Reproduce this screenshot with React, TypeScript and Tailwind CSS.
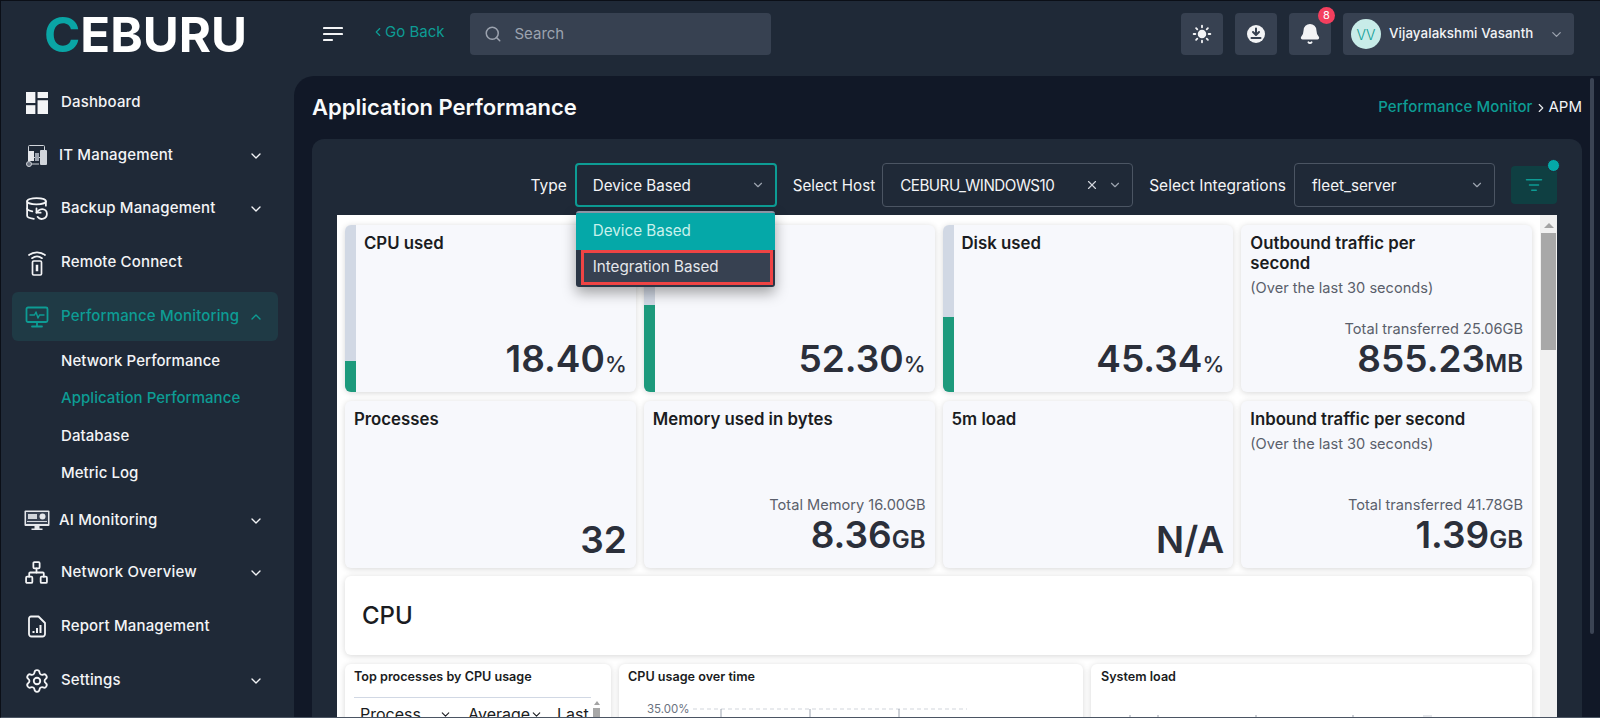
import React from "react";
import { ChevronDown, ChevronUp, ChevronLeft, ChevronRight, Search, Sun, Bell, X, ListFilter, DatabaseBackup, Network, Settings } from "lucide-react";

const ui = "font-['Inter','Liberation_Sans',sans-serif]";

function DashIcon() {
  return (
    <svg width="22" height="22" viewBox="0 0 20 20" fill="#f3f4f6">
      <rect x="0" y="0" width="8.5" height="10" />
      <rect x="10.5" y="0" width="9.5" height="5.5" />
      <rect x="0" y="12" width="8.5" height="8" />
      <rect x="10.5" y="7.5" width="9.5" height="12.5" />
    </svg>
  );
}

function ItIcon() {
  return (
    <svg width="24" height="24" viewBox="0 0 24 24" fill="none" stroke="#d1d5db" strokeWidth="1">
      <rect x="3.5" y="1.5" width="16" height="12" rx="1" />
      <rect x="3" y="7" width="6" height="10" fill="#e5e7eb" stroke="none" />
      <rect x="10" y="9" width="4" height="8" fill="#9ca3af" stroke="none" />
      <rect x="15" y="6" width="7" height="15" rx="1" fill="#d1d5db" stroke="none" />
      <circle cx="4" cy="20" r="2.5" fill="#6b7280" />
      <path d="M7 20h7" />
    </svg>
  );
}

function RemoteIcon() {
  return (
    <svg width="20" height="26" viewBox="0 0 20 26" fill="none" stroke="#f3f4f6" strokeWidth="1.7" strokeLinecap="round">
      <path d="M2 5c4.5-3.6 11.5-3.6 16 0" />
      <path d="M5 8.2c3-2.2 7-2.2 10 0" />
      <rect x="5.5" y="11" width="9" height="14" rx="1.2" />
      <rect x="9" y="15" width="2" height="6" fill="#f3f4f6" strokeWidth="0.5" />
    </svg>
  );
}

function PerfIcon() {
  return (
    <svg width="24" height="22" viewBox="0 0 24 22" fill="none" stroke="#0d9c94" strokeWidth="1.8" strokeLinecap="round" strokeLinejoin="round">
      <rect x="1.5" y="1.5" width="21" height="14.5" rx="1.5" />
      <path d="M5 9h4.5l1.5-3 2 6 1.5-3H19" strokeWidth="1.4" />
      <path d="M12 16v4M7 20.5h10" />
    </svg>
  );
}

function AiIcon() {
  return (
    <svg width="26" height="21" viewBox="0 0 26 21" fill="none">
      <rect x="0.5" y="0.5" width="25" height="15.5" rx="1" fill="#e5e7eb" />
      <rect x="2" y="2" width="22" height="12" fill="#374151" />
      <rect x="4" y="4" width="9" height="5" fill="#d1d5db" />
      <circle cx="18.5" cy="6.5" r="3" fill="#e5e7eb" />
      <path d="M3 11.5h20" stroke="#d1d5db" />
      <path d="M10.5 16h5v2.5h3V20h-11v-1.500h3z" fill="#e5e7eb" />
    </svg>
  );
}

function ReportIcon() {
  return (
    <svg width="20" height="23" viewBox="0 0 20 23" fill="none" stroke="#f3f4f6" strokeWidth="1.8" strokeLinejoin="round">
      <path d="M4 1.500h7.500L18 8v11a2.500 2.500 0 0 1-2.500 2.500h-11A2.500 2.500 0 0 1 2 19V3.500a2 2 0 0 1 2-2z" />
      <path d="M6.500 18v-2M10 18v-5M13.500 18v-8" strokeWidth="2" />
    </svg>
  );
}

function Hamburger() {
  return (
    <svg width="20" height="16" viewBox="0 0 20 16" stroke="#f3f4f6" strokeWidth="2.200" strokeLinecap="round">
      <path d="M1 2h18M1 8h18M1 14h8" />
    </svg>
  );
}

function DownloadIcon() {
  return (
    <svg width="20" height="20" viewBox="0 0 20 20">
      <circle cx="10" cy="10" r="9" fill="#f3f4f6" />
      <path d="M10 4.500v6M7 8l3 3 3-3M5.500 14h9" stroke="#374151" strokeWidth="2" fill="none" strokeLinecap="round" strokeLinejoin="round" />
    </svg>
  );
}

function NavRow({ icon, label, open, active, tight, className }: { icon: React.ReactNode; label: string; open?: boolean; active?: boolean; tight?: boolean; className: string }) {
  const chevron = open === undefined ? null : active ? <ChevronUp size={16} /> : <ChevronDown size={16} />;
  return (
    <div className={`flex h-[49px] items-center rounded-md pr-[14px] ${active ? "bg-[#1f3a45] text-[#0d9c94]" : "text-[#f3f4f6]"} ${className}`}>
      <div className="flex w-[49px] shrink-0 justify-center">{icon}</div>
      <span className={`text-[15px] font-medium tracking-[0.16px] whitespace-nowrap ${tight ? "-ml-[2px]" : ""}`}>{label}</span>
      {chevron && <span className="ml-auto">{chevron}</span>}
    </div>
  );
}

function SubRow({ label, active }: { label: string; active?: boolean }) {
  return (
    <div className={`flex h-[37.5px] items-center pl-[60px] text-[15px] font-medium tracking-[0.05px] ${active ? "text-[#0d9c94]" : "text-[#f3f4f6]"}`}>{label}</div>
  );
}

function Sidebar() {
  return (
    <aside className="flex w-[293px] shrink-0 flex-col">
      <div className="h-[76px] pl-[43px] pt-[14px]">
        <svg width="212" height="42" viewBox="0 0 212 42">
          <text x="0" y="37" textLength="203" lengthAdjust="spacingAndGlyphs" fontFamily="Inter, sans-serif" fontSize="48" fontWeight="700" fill="#fff">
            <tspan fill="#0aa5a5">C</tspan>EBURU
          </text>
        </svg>
      </div>
      <nav className="pl-[11px] pr-[16px] pt-[1px]">
        <NavRow icon={<DashIcon />} label="Dashboard" className="" />
        <NavRow icon={<ItIcon />} label="IT Management" open tight className="mt-[4px]" />
        <NavRow icon={<DatabaseBackup size={25} strokeWidth={1.7} />} label="Backup Management" open className="mt-[4px]" />
        <NavRow icon={<RemoteIcon />} label="Remote Connect" className="mt-[5px]" />
        <NavRow icon={<PerfIcon />} label="Performance Monitoring" open active className="mt-[5px]" />
        <div className="-ml-[11px] pt-[1px]">
          <SubRow label="Network Performance" />
          <SubRow label="Application Performance" active />
          <SubRow label="Database" />
          <SubRow label="Metric Log" />
        </div>
        <NavRow icon={<AiIcon />} label="AI Monitoring" open tight className="mt-[4px]" />
        <NavRow icon={<Network size={25} strokeWidth={1.7} />} label="Network Overview" open className="mt-[3px]" />
        <NavRow icon={<ReportIcon />} label="Report Management" className="mt-[5px]" />
        <NavRow icon={<Settings size={26} strokeWidth={1.7} />} label="Settings" open className="mt-[5px]" />
      </nav>
    </aside>
  );
}

function IconButton({ children }: { children: React.ReactNode }) {
  return <div className="relative flex h-[42px] w-[42px] items-center justify-center rounded bg-[#374151] text-[#f3f4f6]">{children}</div>;
}

function Header() {
  return (
    <header className="flex h-[75px] shrink-0 items-start pt-[12px] text-[#f3f4f6]">
      <div className="ml-[29px] mt-[13px]"><Hamburger /></div>
      <div className="ml-[29px] mt-[8px] flex items-center text-[15px] text-[#0d9c94]">
        <ChevronLeft size={14} className="-ml-[1px]" />
        <span>Go Back</span>
      </div>
      <div className="ml-[26px] flex h-[42px] w-[301px] items-center rounded bg-[#374151] pl-[14px] text-[#9ca3af]">
        <Search size={18} />
        <span className="ml-[12px] text-[15px]">Search</span>
      </div>
      <div className="ml-auto mr-[26px] flex gap-[12px]">
        <IconButton><Sun size={20} fill="#f3f4f6" strokeWidth={2.200} /></IconButton>
        <IconButton><DownloadIcon /></IconButton>
        <IconButton>
          <Bell size={22} fill="#f3f4f6" />
          <span className="absolute -top-[6px] right-[-4px] flex h-[17px] w-[17px] items-center justify-center rounded-full bg-[#f43f5e] text-[11px] text-white">8</span>
        </IconButton>
        <div className="flex h-[42px] w-[231px] items-center rounded bg-[#374151] pl-[8px]">
          <span className="flex h-[30px] w-[30px] items-center justify-center rounded-full bg-[#c8ece8] text-[14px] font-light text-[#0d9c94]">VV</span>
          <span className="ml-[8px] text-[13.300px] font-medium tracking-[0.1px] whitespace-nowrap">Vijayalakshmi Vasanth</span>
          <ChevronDown size={15} className="ml-auto mr-[10px] text-[#9ca3af]" />
        </div>
      </div>
    </header>
  );
}

function Select({ width, value, valueClass, focus, clear, children }: { width: string; value: string; valueClass?: string; focus?: boolean; clear?: boolean; children?: React.ReactNode }) {
  return (
    <div className={`relative flex h-[44px] items-center rounded pr-[10px] text-[15.200px] text-[#f3f4f6] ${width} ${focus ? "border-2 border-[#0d9c94] pl-[16px]" : "border border-[#4b5563] pl-[17px]"}`}>
      <span className={`pt-[2px] whitespace-nowrap ${valueClass ?? ""}`}>{value}</span>
      {clear && <X size={14} className="ml-auto mr-[9px] text-[#d1d5db]" />}
      <ChevronDown size={14} className={`${clear ? "" : "ml-auto"} text-[#9ca3af]`} />
      {children}
    </div>
  );
}

function TypeMenu() {
  return (
    <div className="absolute -left-[1px] top-[46px] z-10 h-[76px] w-[199px] overflow-hidden rounded-[3px] border-t-2 border-[#8b95a5] bg-[#2b3646] shadow-[0_6px_14px_rgba(0,0,0,0.35)]">
      <div className="flex h-[37px] items-center bg-[#05a8a8] pl-[17px] text-[#c9f1ec]">Device Based</div>
      <div className="ml-[5px] mr-[2px] flex h-[35px] items-center border-[3px] border-[#ef4444] bg-[#374151] pl-[9px] text-[#e5e7eb]">Integration Based</div>
    </div>
  );
}

function Meter({ used }: { used: string }) {
  return (
    <div className="flex w-[11px] shrink-0 flex-col justify-end overflow-hidden rounded-l-md bg-[#d1d8e4]">
      <div className={`bg-[#1d9a7c] ${used}`} />
    </div>
  );
}

function Stat({ title, note, total, value, unit, meter }: { title?: React.ReactNode; note?: string; total?: string; value: string; unit?: string; meter?: string }) {
  return (
    <div className="flex h-[167px] rounded-md bg-[#f7f8fc] shadow-[0_1px_6px_rgba(0,0,0,0.16)]">
      {meter && <Meter used={meter} />}
      <div className={`flex min-w-0 flex-1 flex-col pb-[8px] pr-[9px] pt-[8px] ${meter ? "pl-[8px]" : "pl-[9px]"}`}>
        {title && <div className="text-[16.800px] leading-[20px] font-semibold text-[#1a1c21]">{title}</div>}
        {note && <div className="mt-[5px] text-[14.600px] leading-[20px] text-[#5a5f6b]">{note}</div>}
        <div className="mt-auto text-right">
          {total && <div className="text-[14.600px] leading-[20px] text-[#5a5f6b]">{total}</div>}
          <div className="text-[37px] leading-[40px] font-semibold text-[#2b2f3a]">
            {value}
            {unit && <span className={unit === "%" ? "text-[22px] font-medium" : "text-[24px] font-semibold"}>{unit}</span>}
          </div>
        </div>
      </div>
    </div>
  );
}

function Content() {
  return (
    <div className="mx-[25px] mt-[8px] flex min-h-0 flex-1 overflow-hidden bg-white">
      <div className="min-w-0 flex-1 px-[8px] pt-[10px]">
        <div className="grid grid-cols-4 gap-x-2 gap-y-[9px]">
          <Stat title="CPU used" value="18.40" unit="%" meter="h-[31px]" />
          {/* title sits under the open dropdown */}
          <Stat value="52.30" unit="%" meter="h-[87px]" />
          <Stat title="Disk used" value="45.34" unit="%" meter="h-[75px]" />
          <Stat title={<>Outbound traffic per<br />second</>} note="(Over the last 30 seconds)" total="Total transferred 25.06GB" value="855.23" unit="MB" />
          <Stat title="Processes" value="32" />
          <Stat title="Memory used in bytes" total="Total Memory 16.00GB" value="8.36" unit="GB" />
          <Stat title="5m load" value="N/A" />
          <Stat title="Inbound traffic per second" note="(Over the last 30 seconds)" total="Total transferred 41.78GB" value="1.39" unit="GB" />
        </div>
        <div className="mt-2 flex h-[79px] items-center rounded-md bg-white pl-[17px] text-[24px] font-medium text-[#1a1c21] shadow-[0_1px_6px_rgba(0,0,0,0.16)]">CPU</div>
        <div className="mt-[9px] grid grid-cols-[266px_464px_1fr] gap-x-2">
          <div className="h-[80px] rounded-md bg-white pl-[9px] pt-[5px] shadow-[0_1px_6px_rgba(0,0,0,0.16)]">
            <div className="text-[12.600px] leading-[16px] font-semibold text-[#1a1c21]">Top processes by CPU usage</div>
            <div className="mt-[12px] flex">
              <div className="flex h-[40px] w-[237px] items-start overflow-hidden border-t border-[#d1d8e4] pl-[6px] pt-[4px] text-[16px] text-[#1a1c21]">
                <span className="w-[79px] shrink-0">Process</span>
                <ChevronDown size={13} className="mt-[6px] shrink-0" />
                <span className="ml-[16px] w-[62px] shrink-0">Average</span>
                <ChevronDown size={13} className="mt-[6px] shrink-0" />
                <span className="ml-[14px] shrink-0">Last</span>
              </div>
              <div className="ml-[2px] flex w-[7px] flex-col items-center pt-[4px]">
                <span className="h-0 w-0 border-x-[3px] border-b-[4px] border-x-transparent border-b-[#a3a3a3]" />
                <div className="mt-[3px] h-[30px] w-[7px] bg-[#a8a8a8]" />
              </div>
            </div>
          </div>
          <div className="h-[80px] rounded-md bg-white pl-[9px] pt-[5px] shadow-[0_1px_6px_rgba(0,0,0,0.16)]">
            <div className="text-[12.600px] leading-[16px] font-semibold text-[#1a1c21]">CPU usage over time</div>
            <svg width="440" height="40" className="mt-[4px]">
              <text x="19" y="24" fontSize="11.500" fontFamily="Inter, sans-serif" fill="#6b7280">35.00%</text>
              <path d="M65 20H339" stroke="#d1d5db" strokeDasharray="4 3" />
              <path d="M93 20v20M182 20v20M271 20v20" stroke="#9ca3af" />
            </svg>
          </div>
          <div className="h-[80px] rounded-md bg-white pl-[10px] pt-[5px] shadow-[0_1px_6px_rgba(0,0,0,0.16)]">
            <div className="text-[12.600px] leading-[16px] font-semibold text-[#1a1c21]">System load</div>
            <svg width="420" height="40" className="mt-[4px]">
              <path d="M29 26v14M57 26v14M155 26v14M252 26v14" stroke="#9ca3af" />
              <rect x="322" y="26" width="9" height="14" fill="#e5e7eb" />
              <path d="M369 40l2-3" stroke="#4b5563" />
            </svg>
          </div>
        </div>
      </div>
      <div className="flex w-[17px] shrink-0 flex-col items-center bg-[#f1f1f1] pt-[8px]">
        <span className="h-0 w-0 border-x-[5px] border-b-[5px] border-x-transparent border-b-[#a3a3a3]" />
        <div className="mt-[5px] h-[117px] w-[15px] bg-[#a8a8a8]" />
      </div>
    </div>
  );
}

function Main() {
  return (
    <main className="relative flex min-h-0 flex-1 flex-col rounded-tl-[20px] bg-[#111827] pl-[18px] pr-[18px]">
      <div className="flex h-[63px] shrink-0 items-center justify-between">
        <h1 className="text-[22px] font-semibold text-[#f9fafb]">Application Performance</h1>
        <div className="flex items-center text-[15px] font-medium">
          <span className="tracking-[0.1px] text-[#0d9c94]">Performance Monitor</span>
          <ChevronRight size={14} className="mx-[1px] text-[#e5e7eb]" />
          <span className="font-normal text-[#f3f4f6]">APM</span>
        </div>
      </div>
      <div className="flex min-h-0 flex-1 flex-col rounded-t-xl bg-[#1f2937]">
        <div className="flex h-[68px] shrink-0 items-center justify-end pr-[25px] pt-[24px] text-[15.500px] text-[#f3f4f6]">
          <span className="pt-[2px]">Type</span>
          <div className="ml-[8px]">
            <Select width="w-[202px]" value="Device Based" focus>
              <TypeMenu />
            </Select>
          </div>
          <span className="ml-[16px] pt-[2px] text-[15.200px]">Select Host</span>
          <div className="ml-[7px]"><Select width="w-[251px]" value="CEBURU_WINDOWS10" valueClass="tracking-[-0.5px]" clear /></div>
          <span className="ml-[16px] pt-[2px]">Select Integrations</span>
          <div className="ml-[8px]"><Select width="w-[201px]" value="fleet_server" /></div>
          <div className="relative ml-[16px] flex h-[38px] w-[46px] items-center justify-center rounded bg-[#0f3f42] text-[#0d9c94]">
            <ListFilter size={18} />
            <span className="absolute -right-[3px] -top-[7px] h-[13px] w-[13px] rounded-full border border-[#1f2937] bg-[#05a8a8]" />
          </div>
        </div>
        <Content />
      </div>
      <div className="absolute right-[6px] top-[2px] h-[556px] w-[4px] rounded-full bg-[#3b4454]" />
    </main>
  );
}

export default function App() {
  return (
    <div className={`flex h-[718px] w-[1600px] overflow-hidden border-l border-t border-b border-b-[#4b5563] border-l-[#0b0f17] border-t-[#0b0f17] bg-[#1f2937] ${ui}`}>
      <Sidebar />
      <div className="flex min-w-0 flex-1 flex-col">
        <Header />
        <Main />
      </div>
    </div>
  );
}
